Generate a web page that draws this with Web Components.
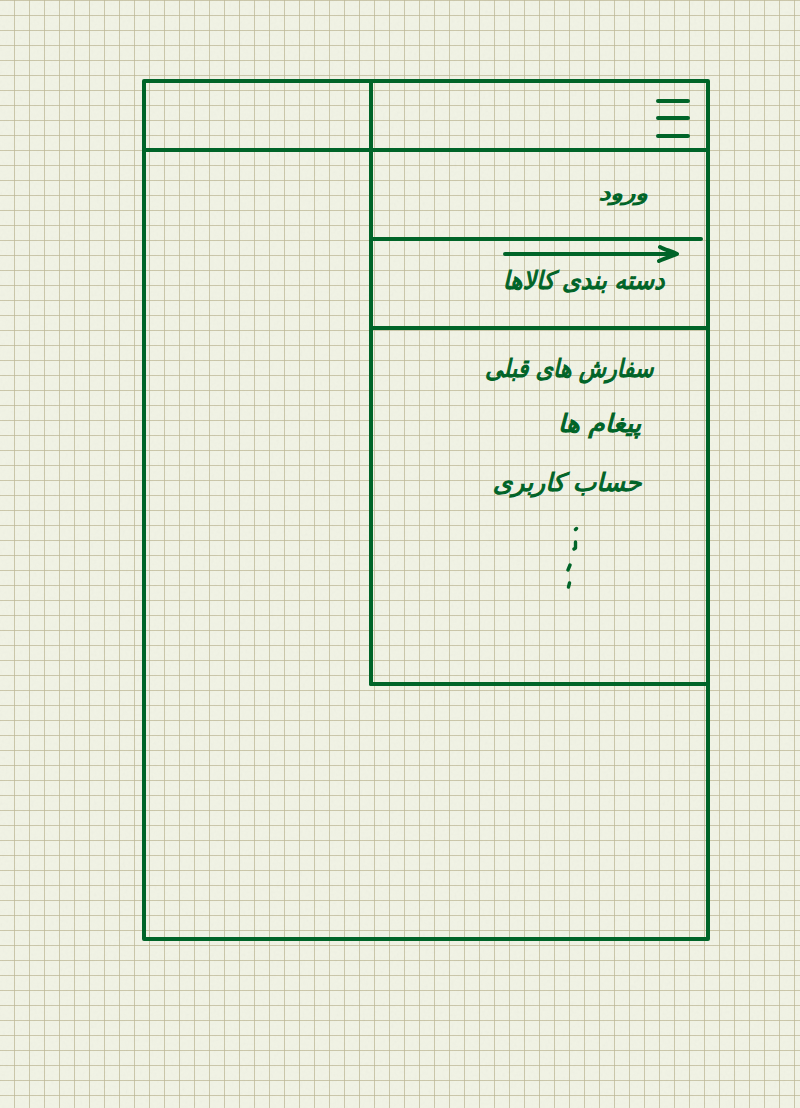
<!DOCTYPE html>
<html lang="fa">
<head>
<meta charset="utf-8">
<title>Menu wireframe</title>
<style>html,body{margin:0;padding:0}</style>
</head>
<body>
<graph-paper>
  <wire-frame>
    <menu-icon slot="head"></menu-icon>
    <menu-section slot="menu" class="login" style="--h:85px;--end:3px">
      <ink-text w="49" size="20" right="57" top="25">ورود</ink-text>
    </menu-section>
    <menu-section slot="menu" style="--h:85px;--end:-2px">
      <long-arrow></long-arrow>
      <ink-text w="162" size="25" right="40" top="2">دسته بندی کالاها</ink-text>
    </menu-section>
    <menu-list slot="menu">
      <ink-text w="169" size="25" right="51" top="23">سفارش های قبلی</ink-text>
      <ink-text w="83" size="25" right="64" top="23">پیغام ها</ink-text>
      <ink-text w="149" size="25" right="63" top="27">حساب کاربری</ink-text>
      <more-dots></more-dots>
    </menu-list>
  </wire-frame>
</graph-paper>
<script>
const define = (name, html, ready) => customElements.define(name, class extends HTMLElement {
  constructor() {
    super();
    this.attachShadow({mode: 'open'}).innerHTML = html;
  }
  connectedCallback() { if (ready) ready(this); }
});

define('graph-paper', `<style>
  :host{display:block;position:relative;box-sizing:border-box;width:800px;height:1108px;padding:79px 90px 0 142px;
    --ink:#006428;color:var(--ink);
    background:
      linear-gradient(90deg,transparent 14px,#bdb895c0 14px) 0 0/15px 15px,
      linear-gradient(#bdb895c0 1px,transparent 1px) 0 0/15px 15px,
      #f1f3e5}
  .grain{position:absolute;inset:0;opacity:.05}
  ::slotted(*){position:relative}
</style><svg class="grain" width="800" height="1108"><filter id="g" x="0" y="0" width="100%" height="100%">
<feTurbulence type="fractalNoise" baseFrequency=".35" numOctaves="2"/><feColorMatrix type="saturate" values="0"/></filter>
<rect width="800" height="1108" filter="url(#g)"/></svg><slot></slot>`);

define('wire-frame', `<style>
  :host{display:flex;flex-direction:column;box-sizing:border-box;width:568px;height:862px;
    border:4px solid var(--ink);border-radius:2px}
  header{display:grid;grid-template-columns:223px 1fr;height:65px;border-bottom:4px solid var(--ink)}
  .bar{border-left:4px solid var(--ink);display:flex;justify-content:flex-end;padding:15px 15px 0 0}
  aside{margin-left:223px;height:530px;border:solid var(--ink);border-width:0 0 4px 4px;
    border-bottom-left-radius:2px;display:flex;flex-direction:column}
</style><header><div></div><div class="bar"><slot name="head"></slot></div></header>
<aside><slot name="menu"></slot></aside>`);

define('menu-icon', `<style>:host{display:block;width:35px;height:42px}svg{display:block}</style>
<svg width="35" height="42" fill="none" stroke="currentColor" stroke-width="4" stroke-linecap="round">
<path d="M2 3H32M2 20H32M2 38H32"/></svg>`);

define('menu-section', `<style>
  :host{display:block}
  .body{height:var(--h);display:flex;flex-direction:column;align-items:flex-end}
  .rule{height:4px;margin-right:var(--end);background:var(--ink);border-radius:0 2px 2px 0}
</style><div class="body"><slot></slot></div><div class="rule"></div>`);

define('menu-list', `<style>
  :host{display:flex;flex-direction:column;align-items:flex-end}
</style><slot></slot>`);

define('long-arrow', `<style>:host{display:block;width:178px;height:22px;margin-right:26px}svg{display:block}</style>
<svg width="178" height="22" fill="none" stroke="currentColor" stroke-width="4" stroke-linecap="round" stroke-linejoin="round">
<path d="M3 13H174M158 6C163 9 170 10 175 13C170 15 163 17 157 20"/></svg>`);

define('more-dots', `<style>:host{display:block;width:14px;height:66px;margin:26px 126px 0 0}svg{display:block}</style>
<svg width="14" height="66" fill="none" stroke="currentColor" stroke-width="3.400" stroke-linecap="round" stroke-linejoin="round">
<path d="M9.500 4.500L10.500 3.500M9.500 17V23L8 24M4 40L2 45M3.500 58L2.500 62"/></svg>`);

define('ink-text', `<style>
  :host{display:flex;justify-content:flex-end;height:32px;direction:ltr}
  span{display:block;flex:none;direction:rtl;white-space:nowrap;line-height:32px;
    font-family:"DejaVu Sans",sans-serif;-webkit-text-stroke:1.1px currentColor;stroke-linejoin:round;
    transform-origin:100% 60%}
</style><span><slot></slot></span>`, el => {
  const s = el.shadowRoot.querySelector('span');
  const w = +el.getAttribute('w');
  el.style.width = w + 'px';
  el.style.margin = el.getAttribute('top') + 'px ' + el.getAttribute('right') + 'px 0 0';
  s.style.fontSize = el.getAttribute('size') + 'px';
  s.style.transform = 'scaleX(' + w / s.offsetWidth + ') skewX(-14deg)';
});
</script>
</body>
</html>
